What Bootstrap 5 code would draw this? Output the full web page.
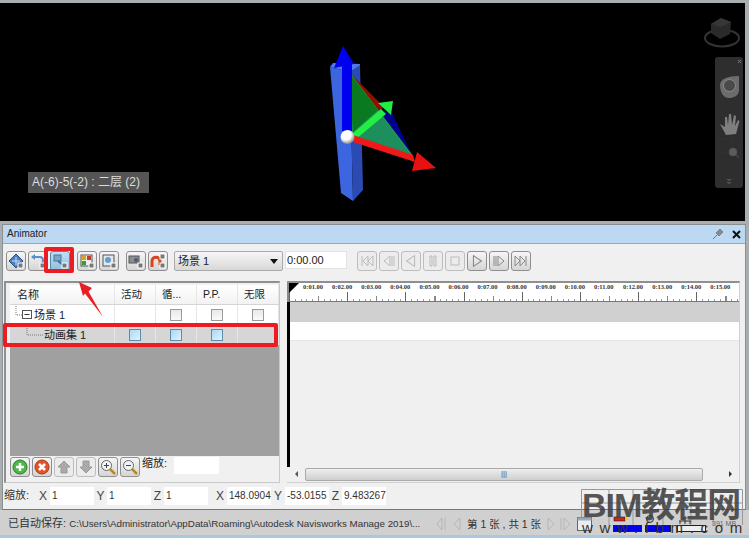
<!DOCTYPE html>
<html lang="zh-CN">
<head>
    <meta charset="UTF-8">
    <title>Animator</title>
    <link href="https://cdn.jsdelivr.net/npm/bootstrap@5.3.0/dist/css/bootstrap.min.css" rel="stylesheet">
    <style>
        html, body { height: 538px; overflow: hidden; }
        body {
            width: 749px;
            background: #a9aeb0;
            font-family: "Liberation Sans", "Noto Sans CJK SC", sans-serif;
            font-size: 11px;
            color: #222;
            position: relative;
        }
        svg { display: block; }

        /* 3D view */
        .scene { height: 218px; margin: 3px 4px 0 0; background: #000; position: relative; }
        .scene-art { position: absolute; left: 0; top: 0; }
        .scene-tag {
            position: absolute; left: 28px; top: 169px; width: 121px; height: 21px;
            background: #555; color: #ddd; font-size: 12px; line-height: 21px; padding-left: 4px; white-space: nowrap;
        }

        /* panel */
        .anim-panel { margin: 3px 3px 0 2px; height: 286px; background: #f0f0f0; border: 1px solid #8a8f92; border-bottom-color: #777; }
        .anim-title { height: 19px; background: #bcd8f2; border-bottom: 1px solid #8eaac4; padding: 0 4px 0 4px; font-size: 10px; line-height: 18px; }
        .anim-tools { height: 37px; padding: 7px 0 0 3px; }
        .tool-btn {
            width: 20px; height: 20px; flex: none; border: 1px solid #8f8f8f; border-radius: 3px;
            background: linear-gradient(#f6f6f6, #d5d5d5); padding: 1px;
        }
        .tool-btn.off { border-color: #bdbdbd; background: #ececec; }
        .tool-btn.on { background: linear-gradient(#bfe0f5, #8fc0e2); border-color: #5a86a8; }
        .tool-set { gap: 2px; margin-right: 7px; }
        .scene-pick {
            width: 109px; height: 20px; margin-left: -1px; border: 1px solid #aaa; border-radius: 2px;
            background: linear-gradient(#f6f6f6, #d8d8d8); font-size: 11px; line-height: 18px; padding: 0 0 0 3px;
        }
        .caret-down { width: 0; height: 0; border: 4px solid transparent; border-top: 5px solid #111; border-bottom: 0; margin-right: 4px; }
        .time-box { width: 62px; height: 18px; margin-left: 2px; background: #fff; border: 1px solid #e2e2e2; font-size: 11px; line-height: 16px; padding-left: 1px; }
        .play-group { margin-left: 10px; gap: 2px; }

        .work-row { height: 202px; padding: 0 5px 0 1px; }
        .tree-pane { width: 276px; flex: none; border: 1px solid #c9c9c9; border-top: 2px solid #8f8f8f; border-left: 2px solid #8f8f8f; padding: 2px 0 0 3px; }
        .tree-table { width: 269px; height: 60px; background: #fff; margin-left: 1px; }
        .tree-head { height: 20px; background: linear-gradient(#fff, #f2f2f2); border-bottom: 1px solid #d5d5d5; }
        .tree-line { height: 20px; }
        .tree-line.picked { background: #d6d6d6; }
        .tree-name { width: 105px; flex: none; position: relative; white-space: nowrap; border-right: 1px solid #e6e6e6; height: 100%; line-height: 20px; }
        .tree-mark { position: absolute; left: 0; top: 0; }
        .tree-cell { width: 41px; flex: none; display: flex; align-items: center; justify-content: center; border-right: 1px solid #e6e6e6; height: 100%; font-size: 10.5px; }
        .tree-head .tree-cell { justify-content: flex-start; padding-left: 6px; }
        .tick-box { width: 12px; height: 12px; border: 1px solid #9a9a9a; background: linear-gradient(#e9e9e9, #fafafa); }
        .tick-box.blue { border-color: #5d8bab; background: linear-gradient(135deg, #a9d8f5, #e2f3fc); }
        .tree-fill { height: 111px; background: #a0a0a0; width: 269px; margin-left: 1px; }
        .tree-foot { height: 23px; gap: 2px; padding: 1px 0 0 1px; }
        .zoom-lbl { width: 28px; margin-right: 2px; line-height: 12px; }
        .zoom-box { width: 45px; height: 17px; background: #fff; }

        .time-pane { width: 453px; flex: none; margin-left: 7px; border: 1px solid #d0d0d0; border-top: 2px solid #8f8f8f; border-left: 0; position: relative; }
        .ruler {
            height: 19px; background-color: #fff; position: relative;
            background-image:
                repeating-linear-gradient(90deg, #666 0 1px, transparent 1px 58.2px),
                repeating-linear-gradient(90deg, #888 0 1px, transparent 1px 29.1px),
                repeating-linear-gradient(90deg, #999 0 1px, transparent 1px 5.82px);
            background-size: 100% 9px, 100% 5px, 100% 2px;
            background-position: 0 bottom, 0 bottom, 0 bottom;
            background-repeat: no-repeat;
            border-bottom: 1px solid #777;
            border-left: 2px solid #888;
        }
        .ruler-corner { position: absolute; left: 0; top: 0; width: 0; height: 0; border-top: 10px solid #000; border-right: 10px solid transparent; }
        .ruler-marks { padding: 0 0 0 14px; font-family: "Liberation Serif", serif; font-size: 6.5px; font-weight: 700; line-height: 8px; color: #333; white-space: nowrap; }
        .ruler-marks span { width: 29.1px; flex: none; }
        .time-body { border-left: 3px solid #000; height: 165px; }
        .lane-grey { height: 20px; background: #d0d0d0; }
        .lane-white { height: 19px; background: #fff; border-bottom: 1px solid #e6e6e6; }
        .h-scroll { height: 14px; padding: 0 4px 0 5px; }
        .scroll-arrow { width: 0; height: 0; border: 3px solid transparent; flex: none; }
        .scroll-thumb { height: 13px; flex: 1; margin: 0 26px 0 7px; border: 1px solid #aaa; border-radius: 2px; background: linear-gradient(#eee, #cfcfcf); color: #555; font-size: 8px; line-height: 10px; text-align: center; }

        .xform-row { height: 26px; padding: 4px 0 0 1px; font-size: 12px; color: #333; }
        .xform-row b { font-weight: 400; color: #444; text-align: center; flex: none; }
        .xform-box { width: 44px; height: 18px; flex: none; background: #fff; line-height: 18px; padding-left: 2px; white-space: nowrap; font-size: 10px; }
        .lbl-w1 { width: 14px; }
        .lbl-w2 { width: 13px; }
        .xform-gap { width: 5px; flex: none; }

        .status-row { height: 25px; background: #d0d0d0; padding: 6px 0 0 8px; font-size: 11px; line-height: 15px; color: #333; white-space: nowrap; position: relative; }
        .path-txt { font-size: 9.8px; }
        .page-nav { position: absolute; left: 435px; top: 5px; height: 18px; gap: 3px; }
        .page-txt { margin: 0 2px; font-size: 10.5px; color: #333; }
        .win-strip { height: 4px; background: #a9c7de; }

        /* overlays */
        .hi-red { position: absolute; border: 4px solid #ea1c24; border-radius: 2px; pointer-events: none; }
        .hi-a { left: 44px; top: 247px; width: 30px; height: 26px; }
        .hi-b { left: 3px; top: 323px; width: 275px; height: 24px; }
        .red-arrow { position: absolute; left: 70px; top: 276px; }
        .wm-grid { position: absolute; left: 581px; top: 489px; }
        .wm-tray { position: absolute; left: 575px; top: 515px; }
        .wm-text { position: absolute; left: 582px; top: 482px; font-size: 34px; line-height: 46px; font-weight: 700; color: #3c3c3c; opacity: .85; white-space: nowrap; letter-spacing: -1px; }
        .wm-url { position: absolute; left: 582px; top: 519px; font-size: 15px; line-height: 18px; letter-spacing: 6.7px; color: #333; white-space: nowrap; }
        .wm-mem { position: absolute; left: 712px; top: 519px; font-size: 7px; line-height: 9px; color: #666; white-space: nowrap; }
    </style>
</head>
<body>
    <svg width="0" height="0" class="position-absolute">
        <symbol id="tri-l" viewBox="0 0 18 18"><path d="M13 3 L4 9 L13 15 Z" fill="none" stroke="#bbb" stroke-width="1.2"/></symbol>
        <symbol id="tri-r" viewBox="0 0 18 18"><path d="M5 3 L14 9 L5 15 Z" fill="none" stroke="#888" stroke-width="1.2"/></symbol>
    </svg>

    <div class="scene">
        <svg class="scene-art" width="745" height="218" viewBox="0 3 745 218">
            <polygon points="330,67 333,63 360,64 360,66 350,72" fill="#4f79ec"/>
            <polygon points="330,67 350,72 353,201 341,193" fill="#3b66e0"/>
            <polygon points="350,72 360,65 363,190 353,201" fill="#2b4bb2"/>
            <polygon points="349,72 384,107 378,113" fill="#8a1200"/>
            <polygon points="378,110 392,113 412,155" fill="#00008f"/>
            <polygon points="349,72 412,155 347,137" fill="#1c8f5c" stroke="#22dd44" stroke-width=".6"/>
            <polygon points="349,72 378,110 353,132" fill="#0a7a20"/>
            <polygon points="342,64 352,64 352,131 342,131" fill="#0000ee"/>
            <polygon points="343,46 334,68 354,64" fill="#0000f0"/>
            <polygon points="352,134 381,109 386,114 356,139" fill="#22ee44"/>
            <polygon points="378,103 393,101 391,115" fill="#22ee44"/>
            <polygon points="353,135 413,155 415,162 353,142" fill="#f01818"/>
            <polygon points="417,152 436,168 412,171" fill="#e81010"/>
            <defs>
                <radialGradient id="ball" cx=".4" cy=".35" r=".7"><stop offset=".5" stop-color="#fff"/><stop offset="1" stop-color="#777"/></radialGradient>
            </defs>
            <circle cx="347.5" cy="137" r="7" fill="url(#ball)"/>

            <!-- view cube and nav bar -->
            <ellipse cx="722" cy="38" rx="17" ry="8.5" fill="none" stroke="#333" stroke-width="2"/>
            <polygon points="711,24 721,18 731,22 730,34 720,39 711,33" fill="#2a2a2a"/>
            <polygon points="711,24 721,18 731,22 721,27" fill="#363636"/>
            <rect x="715" y="57" width="28" height="131" rx="3" fill="#2e2e2e"/>
            <path d="M738 60 l3 3 m0 -3 l-3 3" stroke="#777" fill="none"/>
            <path d="M720 85 C720 79 728 76 739 76 L739 90 C739 96 733 98 729 98 C723 98 720 92 720 85 Z" fill="#6c6c6c"/>
            <circle cx="729.500" cy="85.500" r="6" fill="#4a4a4a" stroke="#8a8a8a"/>
            <path d="M720 124 L725 127 L725 117 L727 117 L728 125 L729 114 L731 114 L732 125 L734 115 L736 116 L735 126 L738 120 L739.500 121 L736 134 L726 135 Z" fill="#7e7e7e"/>
            <rect x="718" y="139" width="15" height="14" fill="none" stroke="#333"/>
            <circle cx="733" cy="152" r="4" fill="#5c5c5c"/>
            <path d="M736 155 l3 3" stroke="#444" stroke-width="1.500"/>
            <path d="M726 179 h6 l-3 2 z M726 182 h6 l-3 2 z" fill="#555"/>
        </svg>
        <div class="scene-tag">A(-6)-5(-2) : 二层 (2)</div>
    </div>

    <div class="anim-panel">
        <div class="anim-title d-flex justify-content-between align-items-center">
            <span>Animator</span>
            <span class="d-flex align-items-center gap-2">
                <svg width="12" height="12" viewBox="0 0 12 12"><path d="M1 11 L5 7" stroke="#777"/><path d="M4 5 L8 1 L11 4 L7 8 Z" fill="#8a8a8a" stroke="#555" stroke-width=".5"/></svg>
                <svg width="9" height="9" viewBox="0 0 9 9"><path d="M1 1 L8 8 M8 1 L1 8" stroke="#111" stroke-width="2"/></svg>
            </span>
        </div>

        <div class="anim-tools d-flex align-items-start">
            <div class="tool-set d-flex">
                <div class="tool-btn"><svg width="16" height="16" viewBox="0 0 16 16"><path d="M8 1 L15 8 L8 15 L1 8 Z" fill="#4a7fc0" stroke="#25507f"/><path d="M8 4 V12 M4 8 H12" stroke="#cfe2f5"/><rect x="10" y="10" width="5" height="5" fill="#777" stroke="#fff"/></svg></div>
                <div class="tool-btn"><svg width="16" height="16" viewBox="0 0 16 16"><path d="M2 4 H10 C14 4 14 11 10 11" fill="none" stroke="#5b8fc7" stroke-width="2"/><path d="M5 1 L1 4 L5 7" fill="#5b8fc7"/><rect x="10" y="10" width="5" height="5" fill="#777" stroke="#fff"/></svg></div>
                <div class="tool-btn on"><svg width="16" height="16" viewBox="0 0 16 16"><rect x="2" y="2" width="7" height="6" fill="#7da6c7" stroke="#4e7696"/><path d="M6 8 L11 12" stroke="#3f6f95" stroke-width="2"/><rect x="10" y="10" width="5" height="5" fill="#777" stroke="#fff"/></svg></div>
            </div>
            <div class="tool-set d-flex">
                <div class="tool-btn"><svg width="16" height="16" viewBox="0 0 16 16"><rect x="2" y="2" width="11" height="11" fill="#eee" stroke="#555"/><rect x="3" y="3" width="4" height="4" fill="#d9a520"/><rect x="8" y="3" width="4" height="4" fill="#c73b2a"/><rect x="3" y="8" width="4" height="4" fill="#3a9a3a"/><rect x="10" y="10" width="5" height="5" fill="#777" stroke="#fff"/></svg></div>
                <div class="tool-btn"><svg width="16" height="16" viewBox="0 0 16 16"><rect x="2" y="2" width="11" height="11" fill="#dfe9f3" stroke="#555"/><circle cx="7" cy="7" r="3" fill="#6d9ccc"/><rect x="10" y="10" width="5" height="5" fill="#777" stroke="#fff"/></svg></div>
            </div>
            <div class="tool-set d-flex">
                <div class="tool-btn"><svg width="16" height="16" viewBox="0 0 16 16"><rect x="1" y="3" width="10" height="7" fill="#8a8f95" stroke="#555"/><circle cx="8" cy="7" r="2" fill="#557"/><rect x="10" y="10" width="5" height="5" fill="#777" stroke="#fff"/></svg></div>
                <div class="tool-btn"><svg width="16" height="16" viewBox="0 0 16 16"><path d="M2 14 V8 C2 3 10 3 10 8 V12" fill="none" stroke="#d8461f" stroke-width="3"/><rect x="10" y="1" width="5" height="5" fill="#777" stroke="#fff"/><rect x="10" y="10" width="5" height="5" fill="#777" stroke="#fff"/></svg></div>
            </div>
            <div class="scene-pick d-flex justify-content-between align-items-center"><span>场景 1</span><i class="caret-down"></i></div>
            <div class="time-box">0:00.00</div>
            <div class="play-group d-flex">
                <div class="tool-btn off"><svg width="16" height="16" viewBox="0 0 16 16"><path d="M3 3 V13 M14 3 L9 8 L14 13 Z M9 3 L4 8 L9 13 Z" fill="none" stroke="#bbb"/></svg></div>
                <div class="tool-btn off"><svg width="16" height="16" viewBox="0 0 16 16"><path d="M9 3 L3 8 L9 13 Z M11 3 V13 M13 3 V13" fill="none" stroke="#bbb"/></svg></div>
                <div class="tool-btn off"><svg width="16" height="16" viewBox="0 0 16 16"><use href="#tri-l"/></svg></div>
                <div class="tool-btn off"><svg width="16" height="16" viewBox="0 0 16 16"><path d="M5 3 H7 V13 H5 Z M9 3 H11 V13 H9 Z" fill="none" stroke="#bbb"/></svg></div>
                <div class="tool-btn off"><svg width="16" height="16" viewBox="0 0 16 16"><rect x="4" y="4" width="8" height="8" fill="none" stroke="#bbb"/></svg></div>
                <div class="tool-btn"><svg width="16" height="16" viewBox="0 0 16 16"><use href="#tri-r"/></svg></div>
                <div class="tool-btn"><svg width="16" height="16" viewBox="0 0 16 16"><path d="M3 3 V13 M5 3 V13 M7 3 L13 8 L7 13 Z" fill="none" stroke="#888"/></svg></div>
                <div class="tool-btn"><svg width="16" height="16" viewBox="0 0 16 16"><path d="M2 3 L7 8 L2 13 Z M7 3 L12 8 L7 13 Z M13 3 V13" fill="none" stroke="#888"/></svg></div>
            </div>
        </div>

        <div class="work-row d-flex">
            <div class="tree-pane">
                <div class="tree-table">
                    <div class="tree-head d-flex">
                        <div class="tree-name" style="padding-left:7px">名称</div>
                        <div class="tree-cell">活动</div><div class="tree-cell">循...</div><div class="tree-cell">P.P.</div><div class="tree-cell">无限</div>
                    </div>
                    <div class="tree-line d-flex">
                        <div class="tree-name" style="padding-left:24px">
                            <svg class="tree-mark" width="24" height="20" viewBox="0 0 24 20"><path d="M6 1 V10 H13" fill="none" stroke="#777" stroke-dasharray="1 1"/><rect x="12.500" y="5.500" width="9" height="8" fill="#fff" stroke="#555"/><path d="M14.500 9.500 H19.500" stroke="#333"/></svg>
                            场景 1
                        </div>
                        <div class="tree-cell"></div>
                        <div class="tree-cell"><i class="tick-box"></i></div><div class="tree-cell"><i class="tick-box"></i></div><div class="tree-cell"><i class="tick-box"></i></div>
                    </div>
                    <div class="tree-line picked d-flex">
                        <div class="tree-name" style="padding-left:34px">
                            <svg class="tree-mark" width="34" height="20" viewBox="0 0 34 20"><path d="M17 1 V10 H34" fill="none" stroke="#777" stroke-dasharray="1 1"/></svg>
                            动画集 1
                        </div>
                        <div class="tree-cell"><i class="tick-box blue"></i></div><div class="tree-cell"><i class="tick-box blue"></i></div><div class="tree-cell"><i class="tick-box blue"></i></div>
                        <div class="tree-cell"></div>
                    </div>
                </div>
                <div class="tree-fill"></div>
                <div class="tree-foot d-flex">
                    <div class="tool-btn"><svg width="16" height="16" viewBox="0 0 16 16"><circle cx="8" cy="8" r="7" fill="#4cb848" stroke="#2c7a2a"/><path d="M8 4 V12 M4 8 H12" stroke="#fff" stroke-width="2.500"/></svg></div>
                    <div class="tool-btn"><svg width="16" height="16" viewBox="0 0 16 16"><circle cx="8" cy="8" r="7" fill="#e4532a" stroke="#a53a1a"/><path d="M5 5 L11 11 M11 5 L5 11" stroke="#fff" stroke-width="2.500"/></svg></div>
                    <div class="tool-btn off"><svg width="16" height="16" viewBox="0 0 16 16"><path d="M8 2 L14 8 H11 V14 H5 V8 H2 Z" fill="#aaa" stroke="#999"/></svg></div>
                    <div class="tool-btn off"><svg width="16" height="16" viewBox="0 0 16 16"><path d="M8 14 L14 8 H11 V2 H5 V8 H2 Z" fill="#aaa" stroke="#999"/></svg></div>
                    <div class="tool-btn"><svg width="16" height="16" viewBox="0 0 16 16"><circle cx="6.500" cy="6.500" r="5" fill="#eef4f8" stroke="#666"/><path d="M4 6.500 H9 M6.500 4 V9" stroke="#444"/><path d="M10 10 L15 15" stroke="#b98a1e" stroke-width="2.500"/></svg></div>
                    <div class="tool-btn"><svg width="16" height="16" viewBox="0 0 16 16"><circle cx="6.500" cy="6.500" r="5" fill="#eef4f8" stroke="#666"/><path d="M4 6.500 H9" stroke="#444"/><path d="M10 10 L15 15" stroke="#b98a1e" stroke-width="2.500"/></svg></div>
                    <span class="zoom-lbl">缩放:</span>
                    <div class="zoom-box"></div>
                </div>
            </div>

            <div class="time-pane">
                <div class="ruler">
                    <i class="ruler-corner"></i>
                    <div class="ruler-marks d-flex">
                        <span>0:01.00</span><span>0:02.00</span><span>0:03.00</span><span>0:04.00</span><span>0:05.00</span>
                        <span>0:06.00</span><span>0:07.00</span><span>0:08.00</span><span>0:09.00</span><span>0:10.00</span>
                        <span>0:11.00</span><span>0:12.00</span><span>0:13.00</span><span>0:14.00</span><span>0:15.00</span>
                    </div>
                </div>
                <div class="time-body">
                    <div class="lane-grey"></div>
                    <div class="lane-white"></div>
                </div>
                <div class="h-scroll d-flex align-items-center">
                    <i class="scroll-arrow" style="border-right-color:#555"></i>
                    <div class="scroll-thumb">|||</div>
                    <i class="scroll-arrow" style="border-left-color:#333"></i>
                </div>
            </div>
        </div>

        <div class="xform-row d-flex align-items-start">
            <span style="width:27px;font-size:11px">缩放:</span>
            <div class="xform-gap"></div>
            <b class="lbl-w1">X</b><div class="xform-box">1</div>
            <b class="lbl-w2">Y</b><div class="xform-box">1</div>
            <b class="lbl-w2">Z</b><div class="xform-box">1</div>
            <div class="xform-gap"></div>
            <b class="lbl-w1">X</b><div class="xform-box">148.0904</div>
            <b class="lbl-w1">Y</b><div class="xform-box">-53.0155</div>
            <b class="lbl-w2">Z</b><div class="xform-box">9.483267</div>
        </div>
    </div>

    <div class="status-row">
        已自动保存: <span class="path-txt">C:\Users\Administrator\AppData\Roaming\Autodesk Navisworks Manage 2019\...</span>
        <div class="page-nav d-flex align-items-center">
            <svg width="14" height="16" viewBox="0 0 14 16"><path d="M7 2 L2 8 L7 14 Z M10 2 V14" fill="none" stroke="#b5b5b5"/></svg>
            <svg width="10" height="16" viewBox="0 0 10 16"><path d="M8 2 L2 8 L8 14 Z" fill="none" stroke="#b5b5b5"/></svg>
            <span class="page-txt">第 1 张 , 共 1 张</span>
            <svg width="10" height="16" viewBox="0 0 10 16"><path d="M2 2 L8 8 L2 14 Z" fill="none" stroke="#b5b5b5"/></svg>
            <svg width="14" height="16" viewBox="0 0 14 16"><path d="M2 2 V14 M5 2 L11 8 L5 14 Z" fill="none" stroke="#b5b5b5"/></svg>
        </div>
    </div>
    <div class="win-strip"></div>

    <div class="hi-red hi-a"></div>
    <div class="hi-red hi-b"></div>
    <svg class="red-arrow" width="40" height="48" viewBox="0 0 40 48"><path d="M9 6 L22 12 L18.500 15.500 L33 41 L15 17.500 L13 20 Z" fill="#ea1c24"/></svg>

    <svg class="wm-grid" width="162" height="36" viewBox="0 0 162 36"><path d="M.5 .5 H161.500 V36 M.5 .5 V36 M.5 14 H161.500 M28 0 V36 M52 0 V36 M82 0 V36 M110 0 V36 M132 0 V36" fill="none" stroke="#999"/></svg>
    <svg class="wm-tray" width="135" height="18" viewBox="0 0 135 18">
        <rect x="2.500" y="2.500" width="14" height="13" fill="#e8eef4" stroke="#666"/><rect x="2.500" y="2.500" width="14" height="3" fill="#9ab"/>
        <rect x="39" y="2" width="11" height="4" fill="#c22" stroke="#222" stroke-width=".6"/><path d="M50 2 L54 4 L50 6 Z" fill="#e6c820"/>
        <circle cx="75" cy="4" r="3.500" fill="#bbb" stroke="#333"/>
        <path d="M109 2 h2 v2 h-2 z M104 6 h12 M105 6 v3 M115 6 v3 M110 4 v5" fill="none" stroke="#333"/>
        <rect x="38.500" y="10.500" width="28" height="6" fill="#0000ee" stroke="#222"/>
        <rect x="70.500" y="10.500" width="25" height="6" fill="#0000ee" stroke="#222"/>
        <rect x="102.500" y="10.500" width="28" height="6" fill="#eee" stroke="#222"/>
    </svg>
    <div class="wm-text">BIM教程网</div>
    <div class="wm-mem">391 MB</div>
    <div class="wm-url">www.fbm.com</div>

    <script src="https://cdn.jsdelivr.net/npm/bootstrap@5.3.0/dist/js/bootstrap.bundle.min.js"></script>
</body>
</html>
